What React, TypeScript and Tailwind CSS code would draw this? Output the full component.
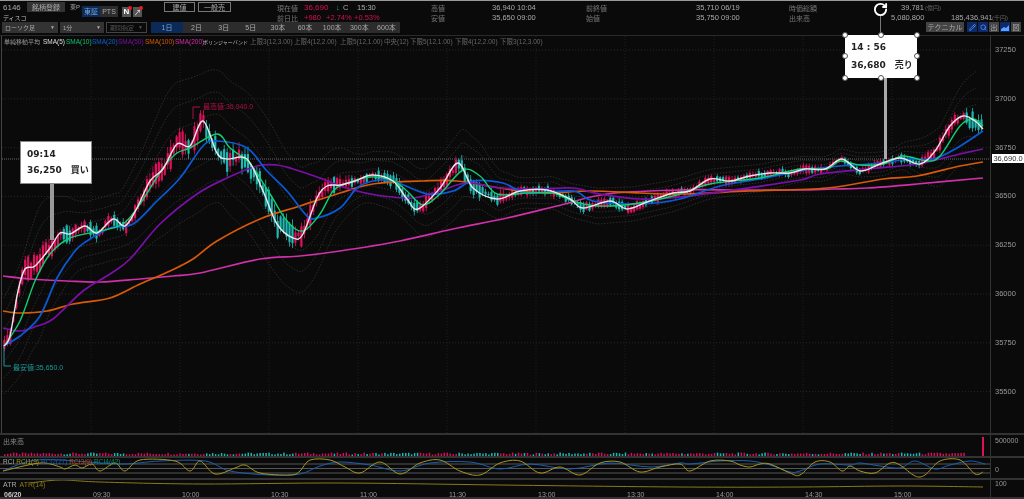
import { Pencil, RotateCw, Search } from 'lucide-react';

type Pt = [number, number];

const WHITE: Pt[] = [[4,345],[10,335],[18,290],[25,268],[35,265],[50,247],[60,232],[70,233],[85,225],[97,232],[113,218],[125,225],[137,207],[150,180],[163,168],[177,143],[190,145],[203,120],[217,152],[227,158],[247,158],[263,190],[277,223],[293,237],[303,233],[317,197],[327,185],[340,184],[355,180],[372,174],[393,180],[407,198],[418,208],[440,187],[458,162],[473,187],[497,198],[520,190],[547,189],[570,198],[583,207],[610,200],[627,208],[647,201],[673,192],[690,190],[710,178],[730,180],[750,175],[770,172],[790,172],[805,168],[825,168],[842,158],[860,170],[880,163],[900,157],[920,163],[935,150],[950,125],[963,115],[975,120],[983,128]];
const GREEN: Pt[] = [[4,345],[20,320],[35,280],[50,253],[70,237],[100,230],[123,223],[140,203],[163,167],[177,152],[190,147],[217,133],[230,147],[250,163],[270,193],[287,220],[303,230],[320,213],[333,190],[345,183],[370,176],[393,180],[407,190],[423,204],[440,193],[463,169],[480,175],[497,193],[527,192],[553,192],[573,200],[597,205],[633,203],[673,195],[710,183],[760,177],[800,168],[827,168],[840,160],[860,164],[883,163],[903,155],[927,160],[940,155],[960,125],[973,118],[983,125]];
const BLUE: Pt[] = [[3,345],[20,335],[40,315],[57,277],[75,250],[87,240],[110,227],[133,223],[157,200],[180,177],[203,145],[217,140],[247,147],[267,170],[287,190],[307,215],[317,217],[340,207],[357,187],[373,180],[393,180],[427,193],[453,190],[473,180],[503,182],[527,192],[573,190],[593,200],[640,203],[680,198],[720,185],[760,178],[800,170],[840,165],[883,162],[907,158],[933,158],[957,147],[983,130]];
const PURPLE: Pt[] = [[3,327],[20,330],[37,325],[53,318],[83,290],[110,273],[130,258],[160,223],[197,193],[227,177],[257,165],[277,164],[293,168],[320,177],[340,185],[357,190],[383,195],[413,197],[440,190],[467,182],[500,187],[540,188],[573,187],[600,193],[640,198],[680,196],[740,188],[800,179],[820,173],[867,168],[917,163],[960,153],[983,148]];
const ORANGE: Pt[] = [[3,310],[20,312],[47,310],[73,303],[110,297],[140,283],[170,270],[193,258],[217,240],[260,218],[300,205],[340,192],[373,183],[423,180],[457,180],[500,187],[540,192],[590,190],[640,192],[680,193],[750,190],[827,187],[883,178],[917,175],[960,165],[983,161]];
const PINK: Pt[] = [[3,275],[30,278],[67,280],[100,281],[140,278],[173,275],[200,272],[260,258],[300,255],[340,250],[400,240],[453,228],[507,217],[557,205],[607,193],[680,189],[740,189],[800,189],[833,188],[867,187],[917,183],[983,177]];
const SIGMA: Pt[] = [[4,16],[40,22],[80,11],[120,11],[170,24],[220,22],[270,24],[310,20],[360,8],[420,11],[460,14],[520,5],[600,6],[700,5],[830,4],[900,4],[960,13],[983,18]];

const RCI_YELLOW: Pt[] = [[3,470],[40,462],[60,466],[65,468],[75,464],[82,467],[92,463],[100,470],[115,462],[125,470],[140,459],[175,460],[190,470],[200,460],[215,473],[235,467],[245,464],[260,472],[290,474],[300,470],[310,459],[330,459],[345,466],[360,472],[380,461],[400,473],[420,462],[440,459],[460,470],[480,474],[500,462],[520,460],[540,472],[560,466],[580,474],[600,462],[620,461],[640,471],[660,466],[680,463],[690,470],[710,460],[730,460],[740,464],[750,466],[760,463],[770,463],[790,472],[800,474],[815,461],[830,461],[842,470],[850,465],[860,470],[875,472],[890,462],[900,464],[915,475],[925,474],[940,460],[960,459],[975,473],[983,471]];
const RCI_BLUE: Pt[] = [[3,470],[30,460],[60,459],[120,463],[160,460],[205,460],[230,470],[270,474],[300,473],[320,465],[340,461],[370,464],[400,470],[430,462],[470,461],[500,468],[530,463],[570,468],[610,462],[650,466],[680,462],[690,463],[720,460],[750,460],[770,464],[790,471],[800,470],[820,463],[850,464],[860,462],[880,465],[900,467],[915,460],[935,468],[950,464],[970,460],[985,463]];
const ATR: Pt[] = [[30,482],[60,479],[100,481],[200,483],[340,482],[500,484],[680,486],[800,486],[900,485],[983,486]];

const PRICE_TICKS = ['37250', '37000', '36750', '36500', '36250', '36000', '35750', '35500'];
const GRID_Y = [49, 97.8, 146.6, 195.4, 244.2, 293, 341.8, 390.6];
const TIME_TICKS = [[91,'09:30'],[180,'10:00'],[269,'10:30'],[358,'11:00'],[447,'11:30'],[536,'13:00'],[625,'13:30'],[714,'14:00'],[803,'14:30'],[892,'15:00']] as const;
const TABS = ['2日', '3日', '5日', '30本', '60本', '100本', '300本', '600本'];
const HANDLES = ['left-[-3px] top-[-3px]', 'left-[33px] top-[-3px]', 'right-[-3px] top-[-3px]', 'left-[-3px] top-[18px]', 'right-[-3px] top-[18px]', 'left-[-3px] bottom-[-3px]', 'left-[33px] bottom-[-3px]', 'right-[-3px] bottom-[-3px]'];

const noise = (i: number) => {
  const v = Math.sin(i * 12.9898) * 43758.5453;
  return v - Math.floor(v);
};

const at = (pts: Pt[], x: number) => {
  if (x <= pts[0][0]) return pts[0][1];
  for (let i = 1; i < pts.length; i++) {
    if (x <= pts[i][0]) {
      const t = (x - pts[i - 1][0]) / (pts[i][0] - pts[i - 1][0]);
      return pts[i - 1][1] + (pts[i][1] - pts[i - 1][1]) * t;
    }
  }
  return pts[pts.length - 1][1];
};

// catmull-rom so the moving averages stay round
const smooth = (pts: Pt[]) => {
  let d = `M${pts[0][0]} ${pts[0][1]}`;
  for (let i = 0; i < pts.length - 1; i++) {
    const p0 = pts[Math.max(i - 1, 0)];
    const p1 = pts[i];
    const p2 = pts[i + 1];
    const p3 = pts[Math.min(i + 2, pts.length - 1)];
    const c1x = p1[0] + (p2[0] - p0[0]) / 6;
    const c1y = p1[1] + (p2[1] - p0[1]) / 6;
    const c2x = p2[0] - (p3[0] - p1[0]) / 6;
    const c2y = p2[1] - (p3[1] - p1[1]) / 6;
    d += `C${c1x.toFixed(1)} ${c1y.toFixed(1)} ${c2x.toFixed(1)} ${c2y.toFixed(1)} ${p2[0]} ${p2[1]}`;
  }
  return d;
};

const band = (k: number) => {
  const pts: Pt[] = [];
  for (let x = 4; x <= 983; x += 9) pts.push([x, at(GREEN, x) + k * at(SIGMA, x)]);
  return pts;
};

const candles = Array.from({ length: 330 }, (_, i) => {
  const x = 4 + i * 2.97;
  const base = at(WHITE, x);
  const amp = 2 + at(SIGMA, x) * 0.5;
  const up = at(WHITE, x + 3) - at(WHITE, x - 3) + (noise(i) - 0.5) * 6 < 0;
  const top = base - amp * noise(i + 500);
  const bottom = base + amp * noise(i + 900);
  return { x, up, top, bottom, hi: top - 1 - noise(i + 40) * amp * 0.5, lo: bottom + 1 + noise(i + 70) * amp * 0.4 };
});

function Info({ label, value, time, labelWidth }: { label: string; value: string; time: string; labelWidth: string }) {
  return (
    <div className="flex items-center h-[10px]">
      <span className={`text-[#777] text-[7px] ${labelWidth}`}>{label}</span>
      <span className="text-[#aaa] text-[7.5px] w-[25px]">{value}</span>
      <span className="text-[#aaa] text-[7.5px]">{time}</span>
    </div>
  );
}

function Select({ label, width, dim }: { label: string; width: string; dim?: boolean }) {
  return (
    <div className={`h-[11px] flex items-center justify-between px-[3px] text-[6px] whitespace-nowrap ${width} ${dim ? 'border border-[#444] text-[#555]' : 'bg-[#333] text-[#aaa]'}`}>
      <span>{label}</span>
      <span className="text-[5px]">▼</span>
    </div>
  );
}

function Callout({ time, price, side, className, handles }: { time: string; price: string; side: string; className: string; handles?: boolean }) {
  return (
    <div className={`absolute w-[72px] h-[43px] bg-white px-[6px] [font-family:'DejaVu_Sans','Noto_Sans_CJK_JP',sans-serif] font-semibold text-[9px] text-[#222] flex flex-col justify-evenly ${handles ? '' : 'border border-[#888]'} ${className}`}>
      <span>{time}</span>
      <span className="flex gap-[9px] whitespace-nowrap"><span>{price}</span><span>{side}</span></span>
      {handles && HANDLES.map((h) => <span key={h} className={`absolute w-[6px] h-[6px] rounded-full bg-white border border-[#555] ${h}`} />)}
    </div>
  );
}

export default function App() {
  return (
    <div className="relative w-[1024px] h-[499px] overflow-hidden bg-[#0a0a0a] flex flex-col blur-[0.35px] [font-family:'Liberation_Sans','Noto_Sans_CJK_JP',sans-serif] text-[8px] leading-none text-[#aaa]">
      <div className="h-[1px] bg-[#999]" />

      {/* 上部の銘柄情報 */}
      <div className="h-[21px] flex items-start pl-[3px]">
        <div className="w-[274px] flex shrink-0">
          <div className="w-[24px] flex flex-col gap-[2px] pt-[3px] whitespace-nowrap">
            <span>6146</span>
            <span className="text-[#bbb] text-[6px] h-[8px] flex items-center">ディスコ</span>
          </div>
          <div className="w-[38px] h-[10px] mt-[1px] bg-[#333] flex items-center justify-center text-[7px]">銘柄登録</div>
          <span className="ml-[5px] mt-[3px] w-[12px] text-[6px] whitespace-nowrap">東P</span>
          <div className="flex h-[11px] mt-[5px] bg-[#2c2c2c] text-[7px]">
            <span className="w-[18px] bg-[#0c2a55] text-[#7aa5d8] flex items-center justify-center">東証</span>
            <span className="w-[18px] flex items-center justify-center">PTS</span>
          </div>
          <span className="relative ml-[4px] mt-[6px] w-[9px] h-[10px] bg-[#555] text-white font-bold flex items-center justify-center">
            N<span className="absolute -top-[1px] -right-[1px] w-[4px] h-[4px] rounded-full bg-[#e02020]" />
          </span>
          <span className="relative ml-[2px] mt-[6px] w-[9px] h-[10px] bg-[#555] text-white flex items-center justify-center text-[7px]">
            ↗<span className="absolute -top-[1px] -right-[1px] w-[4px] h-[4px] rounded-full bg-[#e02020]" />
          </span>
          <div className="ml-[22px] mt-[1px] w-[31px] h-[10px] border border-[#777] flex items-center justify-center text-[7px]">建値</div>
          <div className="ml-[3px] mt-[1px] w-[33px] h-[10px] border border-[#777] flex items-center justify-center text-[7px]">一般売</div>
        </div>

        <div className="w-[154px] shrink-0 flex flex-col pt-[2px] whitespace-nowrap text-[7.5px]">
          <div className="flex items-center h-[10px]">
            <span className="text-[#777] text-[7px] w-[27px]">現在値</span>
            <span className="text-[#d8104f] text-[8px] w-[32px]">36,690</span>
            <span className="text-[#1fb58a] w-[7px]">↓</span>
            <span className="w-[14px]">C</span>
            <span>15:30</span>
          </div>
          <div className="flex items-center h-[10px] text-[#d8104f]">
            <span className="text-[#777] text-[7px] w-[27px]">前日比</span>
            <span className="w-[22px]">+980</span>
            <span className="w-[28px]">+2.74%</span>
            <span>+0.53%</span>
          </div>
        </div>
        <div className="w-[155px] shrink-0 flex flex-col pt-[2px] whitespace-nowrap">
          <Info label="高値" value="36,940" time="10:04" labelWidth="w-[61px]" />
          <Info label="安値" value="35,650" time="09:00" labelWidth="w-[61px]" />
        </div>
        <div className="w-[203px] shrink-0 flex flex-col pt-[2px] whitespace-nowrap">
          <Info label="前終値" value="35,710" time="06/19" labelWidth="w-[110px]" />
          <Info label="始値" value="35,750" time="09:00" labelWidth="w-[110px]" />
        </div>
        <div className="flex-1 flex flex-col pt-[2px] whitespace-nowrap text-[7.5px]">
          <div className="flex items-center h-[10px]">
            <span className="text-[#777] text-[7px] w-[112px]">時価総額</span>
            <span className="w-[24px]">39,781</span>
            <span className="text-[#666] text-[6px]">(億円)</span>
          </div>
          <div className="flex items-center h-[10px]">
            <span className="text-[#777] text-[7px] w-[102px]">出来高</span>
            <span className="w-[60px]">5,080,800</span>
            <span className="w-[41px]">185,436,941</span>
            <span className="text-[#666] text-[6px]">(千円)</span>
          </div>
        </div>
      </div>

      {/* ツールバー */}
      <div className="h-[13px] flex items-start pl-[2px] gap-[2px] text-[7px]">
        <Select label="ローソク足" width="w-[56px]" />
        <Select label="1分" width="w-[44px]" />
        <Select label="期間指定" width="w-[41px]" dim />
        <div className="ml-[2px] flex h-[11px] w-[249px] bg-[#2c2c2c]">
          <span className="w-[32px] bg-[#0c2a55] text-[#7aa5d8] flex items-center justify-center">1日</span>
          {TABS.map((t) => (
            <span key={t} className="flex-1 flex items-center justify-center">{t}</span>
          ))}
        </div>
        <div className="ml-auto flex items-center gap-[1px] pr-[3px]">
          <span className="w-[38px] h-[10px] bg-[#444] flex items-center justify-center text-[7px] mr-[2px]">テクニカル</span>
          <span className="w-[10px] h-[10px] bg-[#0c2a6a] text-[#7ab0ff] flex items-center justify-center"><Pencil size={7} /></span>
          <span className="w-[10px] h-[10px] bg-[#0c2a6a] text-[#7ab0ff] flex items-center justify-center"><Search size={7} /></span>
          <span className="w-[10px] h-[10px] bg-[#444] flex items-center justify-center text-[7px]">出</span>
          <span className="w-[10px] h-[10px] bg-[#0c2a6a] flex items-center justify-center">
            <svg width="8" height="7" viewBox="0 0 8 7"><path d="M0 7V5l3-2 2 1 3-3v6z" fill="#5aa0ff" /></svg>
          </span>
          <span className="w-[10px] h-[10px] bg-[#444] flex items-center justify-center text-[7px]">図</span>
        </div>
      </div>

      {/* チャート本体 */}
      <div className="flex-1 flex flex-col border-t border-[#2a2a2a]">
        <div className="h-[397px] flex">
          <div className="relative w-[990px]">
            <svg className="block w-[990px] h-[397px]" viewBox="0 35 990 397">
              <line x1="1.5" x2="1.5" y1="35" y2="432" stroke="#444" />
              {GRID_Y.map((y) => <line key={y} x1="2" x2="990" y1={y} y2={y} stroke="#262626" strokeDasharray="1 2" />)}
              {TIME_TICKS.map(([x]) => <line key={x} x1={x} x2={x} y1="35" y2="432" stroke="#1f1f1f" strokeDasharray="1 2" />)}
              <line x1="2" x2="990" y1="158" y2="158" stroke="#6a6a6a" strokeDasharray="1 1" />
              {[-3, -2, -1, 1, 2, 3].map((k) => <path key={k} d={smooth(band(k))} fill="none" stroke="#3b3b3b" strokeWidth="0.7" strokeDasharray="1.5 1.5" />)}
              {candles.map((c, i) => (
                <g key={i} fill={c.up ? '#e0105c' : '#1fb8b4'}>
                  <rect x={c.x} y={c.hi} width="0.8" height={c.lo - c.hi} />
                  <rect x={c.x - 0.7} y={c.top} width="2.2" height={Math.max(c.bottom - c.top, 1)} />
                </g>
              ))}
              <path d={smooth(PINK)} fill="none" stroke="#d030a8" strokeWidth="1.7" />
              <path d={smooth(ORANGE)} fill="none" stroke="#d85a08" strokeWidth="1.7" />
              <path d={smooth(PURPLE)} fill="none" stroke="#7a10a8" strokeWidth="1.7" />
              <path d={smooth(BLUE)} fill="none" stroke="#0a5ad8" strokeWidth="1.7" />
              <path d={smooth(GREEN)} fill="none" stroke="#10d070" strokeWidth="1.4" />
              <path d={smooth(WHITE)} fill="none" stroke="#e8e8e8" strokeWidth="1.4" />
              <path d="M193 118V106H200" fill="none" stroke="#d01050" strokeWidth="0.8" />
              <text x="203" y="108" fill="#b01048" fontSize="7">最高値:36,940.0</text>
              <path d="M4 345V365H11" fill="none" stroke="#1fb8b4" strokeWidth="0.8" />
              <text x="13" y="369" fill="#1a9a98" fontSize="7">最安値:35,650.0</text>
            </svg>
            {/* 凡例はチャートの上に重なる */}
            <div className="absolute left-[4px] top-[3px] flex whitespace-nowrap text-[6.5px] text-[#999]">
              <span className="w-[39px] text-[6px]">単純移動平均</span>
              <span className="w-[23px] text-[#ddd]">SMA(5)</span>
              <span className="w-[26px] text-[#10c070]">SMA(10)</span>
              <span className="w-[26px] text-[#1060d0]">SMA(20)</span>
              <span className="w-[27px] text-[#7a10a8]">SMA(50)</span>
              <span className="w-[30px] text-[#d85a08]">SMA(100)</span>
              <span className="w-[28px] text-[#d030a8]">SMA(200)</span>
              <span className="w-[47px] text-[5px] text-[#bbb] flex items-center">ボリンジャーバンド</span>
              <span className="w-[44px] text-[#666]">上限3(12,3.00)</span>
              <span className="w-[46px] text-[#666]">上限4(12,2.00)</span>
              <span className="w-[44px] text-[#666]">上限5(12,1.00)</span>
              <span className="w-[26px] text-[#666]">中央(12)</span>
              <span className="w-[45px] text-[#666]">下限5(12,1.00)</span>
              <span className="w-[45px] text-[#666]">下限4(12,2.00)</span>
              <span className="text-[#666]">下限3(12,3.00)</span>
            </div>
          </div>
          <div className="flex-1 border-l border-[#333] pl-[4px] pt-[10px] text-[7.5px] text-[#999]">
            {PRICE_TICKS.map((p) => <div key={p} className="h-[48.8px]">{p}</div>)}
          </div>
        </div>

        {/* 出来高 */}
        <div className="h-[23px] flex border-t-2 border-[#333]">
          <div className="relative w-[990px]">
            <svg className="block w-[990px] h-[21px]" viewBox="0 434 990 21">
              {candles.slice(0, 324).map((c, i) => (
                <rect key={i} x={c.x} y={455 - 1.5 - noise(i + 7) * 2} width="1.5" height={1.5 + noise(i + 7) * 2} fill={c.up ? '#d0105a' : '#1fb8b4'} />
              ))}
              <rect x="982" y="436" width="2" height="19" fill="#e0105c" />
            </svg>
            <span className="absolute left-[3px] top-[3px] text-[7px] text-[#888]">出来高</span>
          </div>
          <div className="flex-1 border-l border-[#333] pl-[4px] pt-[2px] text-[7px] text-[#999]">500000</div>
        </div>

        {/* RCI */}
        <div className="h-[22px] flex border-t-2 border-[#333]">
          <div className="relative w-[990px]">
            <svg className="block w-[990px] h-[20px]" viewBox="0 457 990 20">
              {[463, 467.5, 472].map((y) => <line key={y} x1="0" x2="990" y1={y} y2={y} stroke="#555" />)}
              <path d={smooth(RCI_BLUE)} fill="none" stroke="#1a5fb0" strokeWidth="1" />
              <path d={smooth(RCI_YELLOW)} fill="none" stroke="#a89520" strokeWidth="1" />
            </svg>
            <div className="absolute left-[3px] top-[1px] flex gap-[2px] whitespace-nowrap text-[6.5px]">
              <span className="text-[#aaa]">RCI</span>
              <span className="text-[#a89520]">RCI1(9)</span>
              <span className="text-[#1a5fb0]">RCI2(27)</span>
              <span className="text-[#c04a20]">RCI3(9)</span>
              <span className="text-[#108a70]">RCI4(42)</span>
            </div>
          </div>
          <div className="flex-1 border-l border-[#333] pl-[4px] pt-[8px] text-[7px] text-[#999]">0</div>
        </div>

        {/* ATR */}
        <div className="h-[13px] flex border-t-2 border-[#333]">
          <div className="relative w-[990px]">
            <svg className="block w-[990px] h-[11px]" viewBox="0 479 990 11">
              <path d={smooth(ATR)} fill="none" stroke="#8a7a18" strokeWidth="1" />
            </svg>
            <div className="absolute left-[3px] top-[1px] flex gap-[3px] whitespace-nowrap text-[7px]">
              <span className="text-[#aaa]">ATR</span>
              <span className="text-[#8a7a18]">ATR(14)</span>
            </div>
          </div>
          <div className="flex-1 border-l border-[#333] pl-[4px] text-[7px] text-[#999]">100</div>
        </div>

        {/* 時間軸 */}
        <div className="flex-1 flex border-b-2 border-[#333] text-[7px] text-[#999]">
          <div className="relative w-[990px]">
            <span className="absolute left-[4px] top-[0px] font-bold text-[#ccc]">06/20</span>
            {TIME_TICKS.map(([x, t]) => (
              <span key={t} className="absolute top-[0px]" style={{ left: x + 2 }}>{t}</span>
            ))}
          </div>
          <div className="flex-1 border-l border-[#333]" />
        </div>
      </div>

      {/* 吹き出しと現在値タグ */}
      <div className="absolute left-[50px] top-[184px] w-[4px] h-[56px] bg-[#999]" />
      <Callout time="09:14" price="36,250" side="買い" className="left-[20px] top-[141px]" />
      <div className="absolute left-[884px] top-[78px] w-[3px] h-[81px] bg-[#aaa]" />
      <div className="absolute left-[880px] top-[16px] w-[1px] h-[19px] bg-[#777]" />
      <RotateCw size={15} strokeWidth={3} className="absolute left-[873px] top-[2px] text-white" />
      <Callout time="14 : 56" price="36,680" side="売り" className="left-[845px] top-[35px]" handles />
      <div className="absolute left-[992px] top-[154px] w-[32px] h-[9px] bg-white text-[#333] text-[7.5px] flex items-center justify-center">36,690.0</div>
    </div>
  );
}
